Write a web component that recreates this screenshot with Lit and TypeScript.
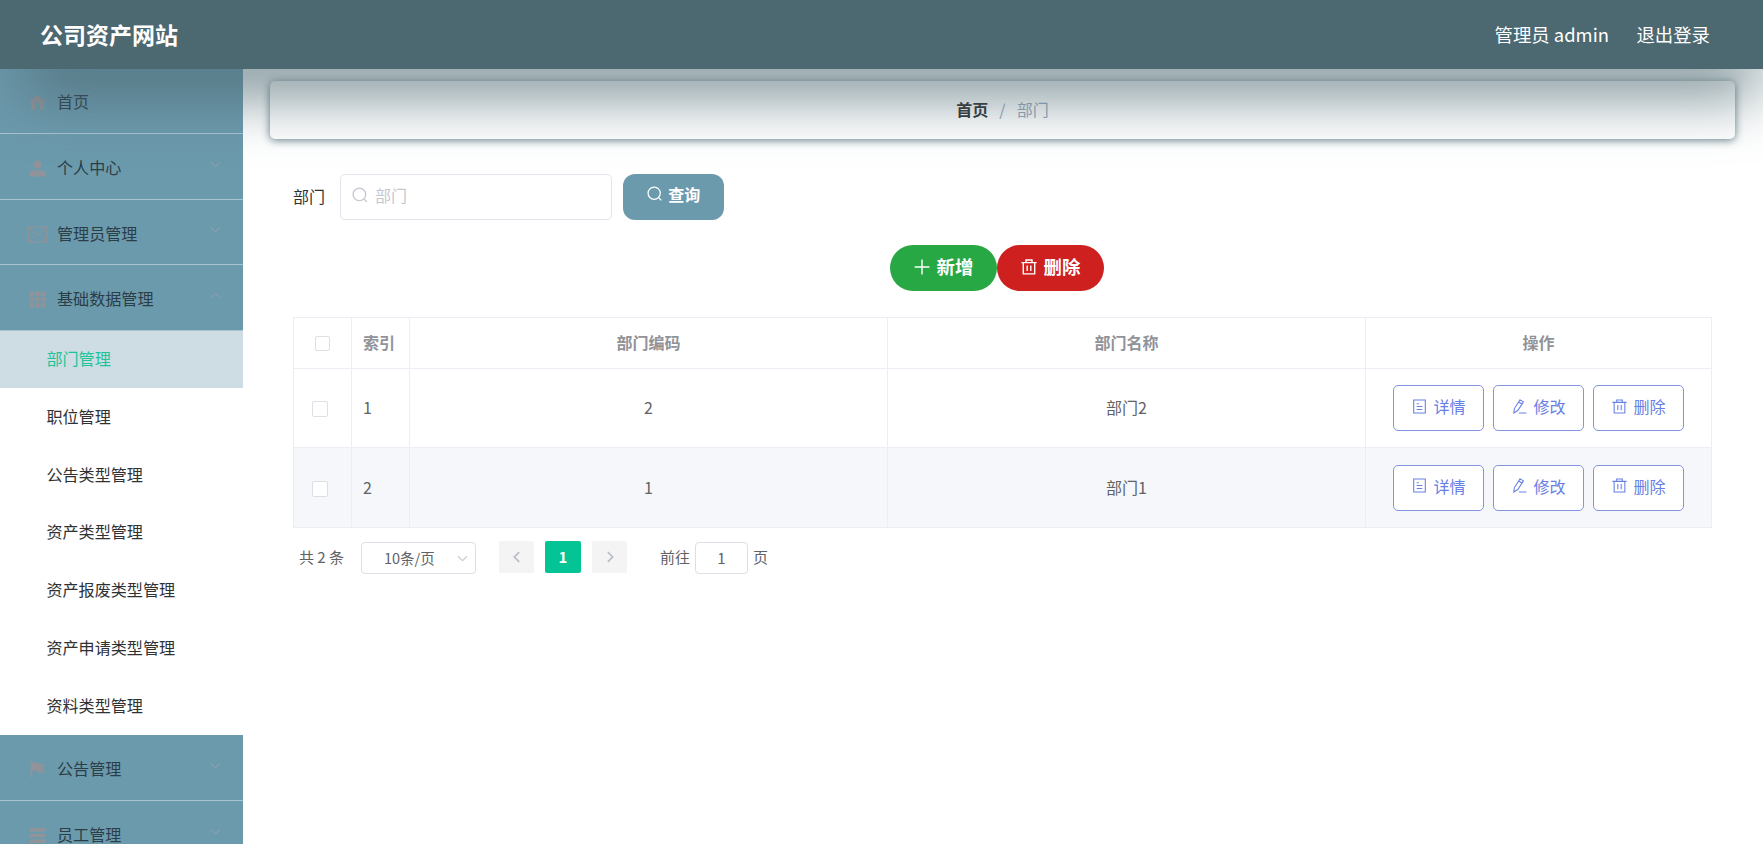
import { LitElement, html, css, svg } from "lit";
import { customElement } from "lit/decorators.js";
import { classMap } from "lit/directives/class-map.js";

const outlines: Record<string, unknown> = {
  search: svg`<circle cx="7.4" cy="7.4" r="6.3"/><path d="M12 12l2.8 2.8"/>`,
  plus: svg`<path d="M8 .6v14.8M.6 8h14.8"/>`,
  trash: svg`<path d="M.4 3.6h15.2M2.3 3.6v11.3h11.4V3.6M5 3.4V1h6v2.4M6.2 6.4v5.6M9.8 6.4v5.6"/>`,
  doc: svg`<path d="M1.8 1h12.4v14H1.8zM5 5h2.4M5 8h6M5 11.2h6"/>`,
  edit: svg`<path d="M8.6 .9l3.6 2.2-6 9.2-4.2 2.5.5-4.6zM7.2 3.2l3.5 2.2M7.4 14.9h8"/>`,
  down: svg`<path d="M2.5 5.2l5.5 5.5 5.5-5.5"/>`,
  up: svg`<path d="M2.5 10.7L8 5.2l5.5 5.5"/>`,
  left: svg`<path d="M10.5 2.5L5 8l5.5 5.5"/>`,
  right: svg`<path d="M5.5 2.5L11 8l-5.5 5.5"/>`,
  mail: svg`<path d="M-.6 1h17.2v14H-.6zM-.4 1.2L8 9l8.4-7.8M-.4 14.8l5.2-5M16.4 14.8l-5.2-5"/>`,
};

const solids: Record<string, unknown> = {
  home: svg`<path d="M8 .8L16 7l-.8 1.2-1.1-.7v7.8h-3.8V10.6a2.3 2.3 0 0 0-4.6 0v4.7H1.9V7.5l-1.1.7L0 7z"/>`,
  user: svg`<circle cx="8" cy="4.4" r="3.9"/><path d="M.3 15.5v-2.6C.3 10.8 2 9.6 4.2 9.6h7.6c2.2 0 3.9 1.2 3.9 3.3v2.6z"/>`,
  grid: svg`<path d="M.5.5h4.4v4.4H.5zM5.8.5h4.4v4.4H5.8zM11.1.5h4.4v4.4h-4.4zM.5 5.8h4.4v4.4H.5zM5.8 5.8h4.4v4.4H5.8zM11.1 5.8h4.4v4.4h-4.4zM.5 11.1h4.4v4.4H.5zM5.8 11.1h4.4v4.4H5.8zM11.1 11.1h4.4v4.4h-4.4z"/>`,
  flag: svg`<path d="M1.5.3h1.6v.9h5.2v1.7H15l-2.3 3.9L15 10.8H8V9.2H3.1V16H1.5z"/>`,
  list: svg`<path d="M.5 1h15v3.2H.5zM.5 6.4h15v3.2H.5zM.5 11.8h15V15H.5z"/>`,
};

@customElement("ui-icon")
class UiIcon extends LitElement {
  static properties = { name: { type: String } };
  declare name: string;
  static styles = css`
    :host { display: inline-flex; width: 16px; height: 16px; flex: none; }
    svg { width: 100%; height: 100%; overflow: visible; }
    .outline { fill: none; stroke: currentColor; stroke-width: var(--weight, 1.3); }
    .solid { fill: currentColor; }
  `;
  render() {
    const solid = this.name in solids;
    return html`<svg viewBox="0 0 16 16" class=${solid ? "solid" : "outline"}>
      ${solid ? solids[this.name] : outlines[this.name]}
    </svg>`;
  }
}

interface MenuEntry { icon: string; label: string; arrow?: string; children?: string[]; }

const menu: MenuEntry[] = [
  { icon: "home", label: "首页" },
  { icon: "user", label: "个人中心", arrow: "down" },
  { icon: "mail", label: "管理员管理", arrow: "down" },
  {
    icon: "grid", label: "基础数据管理", arrow: "up",
    children: ["部门管理", "职位管理", "公告类型管理", "资产类型管理", "资产报废类型管理", "资产申请类型管理", "资料类型管理"],
  },
  { icon: "flag", label: "公告管理", arrow: "down" },
  { icon: "list", label: "员工管理", arrow: "down" },
];

const rows = [
  { code: "2", name: "部门2" },
  { code: "1", name: "部门1" },
];

@customElement("side-menu")
class SideMenu extends LitElement {
  static styles = css`
    :host { display: block; width: 243px; flex: none; overflow: hidden; }
    .entry {
      box-sizing: border-box; height: 65.55px; padding: 2px 21px 0 29px;
      display: flex; align-items: center; gap: 12px;
      background: #6c9aad; border-bottom: 1px solid #a9c4cf;
      font-size: 16.1px;
    }
    .entry:first-child { height: 65px; padding-top: 0; }
    .icon { width: 17px; height: 17px; color: #909399; margin: 3px -1px 0 0; --weight: 1; }
    .label { flex: 1; color: #2b3e47; }
    .arrow { width: 13px; height: 13px; color: #93a5ae; margin-top: -6px; --weight: 1.2; }
    .sub {
      height: 57.8px; padding: 0 0 3px 46.4px; box-sizing: border-box;
      display: flex; align-items: center; background: #fff; color: #303133; font-size: 16.1px;
    }
    .active { background: #cedce3; color: #1dc497; }
  `;
  render() {
    return menu.map((m) => html`
      <div class="entry">
        <ui-icon class="icon" name=${m.icon}></ui-icon>
        <span class="label">${m.label}</span>
        ${m.arrow ? html`<ui-icon class="arrow" name=${m.arrow}></ui-icon>` : ""}
      </div>
      ${(m.children ?? []).map((c, i) => html`<div class=${classMap({ sub: true, active: i === 0 })}>${c}</div>`)}
    `);
  }
}

@customElement("dept-table")
class DeptTable extends LitElement {
  static styles = css`
    :host { display: block; }
    .table { border: 1px solid #ebeef5; border-right: 0; border-bottom: 0; color: #606266; font-size: 16px; }
    .row { display: grid; grid-template-columns: 58px 58px 478px 478px 1fr; height: 79.5px; }
    .head { height: 51px; color: #909399; font-weight: 700; }
    .striped { background: #f5f7fb; }
    .cell {
      box-sizing: border-box; border-right: 1px solid #ebeef5; border-bottom: 1px solid #ebeef5;
      display: flex; align-items: center; justify-content: center; padding-bottom: 1px;
    }
    .index { justify-content: flex-start; padding-left: 11px; }
    .check { justify-content: flex-start; padding-left: 18px; }
    .head .check { padding-left: 21px; }
    .head .box { width: 13px; height: 13px; margin-top: 3px; }
    .box { width: 14px; height: 14px; border: 1px solid #dcdfe6; border-radius: 2px; background: #fff; margin-top: 4px; }
    .actions { gap: 9px; padding: 1px 0 0; }
    .btn {
      box-sizing: border-box; width: 91px; height: 46px; border: 1px solid #8594df; border-radius: 5px;
      background: #fff; color: #6880e4; display: flex; align-items: center; justify-content: center;
      gap: 6px; padding: 0 0 4px 1px; font-size: 16.1px;
    }
    .btn ui-icon { width: 15px; height: 15px; --weight: 1.15; }
  `;
  render() {
    const acts = [["doc", "详情"], ["edit", "修改"], ["trash", "删除"]];
    return html`<div class="table">
      <div class="row head">
        <div class="cell check"><span class="box"></span></div>
        <div class="cell index">索引</div>
        <div class="cell">部门编码</div>
        <div class="cell">部门名称</div>
        <div class="cell">操作</div>
      </div>
      ${rows.map((r, i) => html`<div class=${classMap({ row: true, striped: i % 2 === 1 })}>
        <div class="cell check"><span class="box"></span></div>
        <div class="cell index">${i + 1}</div>
        <div class="cell">${r.code}</div>
        <div class="cell">${r.name}</div>
        <div class="cell actions">
          ${acts.map(([icon, label]) => html`<div class="btn"><ui-icon name=${icon}></ui-icon>${label}</div>`)}
        </div>
      </div>`)}
    </div>`;
  }
}

@customElement("page-bar")
class PageBar extends LitElement {
  static styles = css`
    :host { display: flex; align-items: center; color: #606266; font-size: 15px; height: 33px; padding-left: 6px; }
    .total { width: 62px; }
    .field {
      box-sizing: border-box; height: 32px; border: 1px solid #dcdfe6; border-radius: 4px;
      display: flex; align-items: center; margin-top: 2px;
    }
    .size { width: 115px; padding: 0 6px 0 22px; justify-content: space-between; margin-right: 23px; font-size: 14.5px; }
    .size ui-icon { width: 13px; height: 13px; color: #c8ccd3; --weight: 1.4; }
    .page {
      width: 35px; height: 32px; border-radius: 2px; background: #f4f4f5; color: #b9bdc5;
      display: flex; align-items: center; justify-content: center; margin-right: 11px;
    }
    .page ui-icon { width: 14px; height: 14px; --weight: 2; }
    .current { background: #04c394; color: #fff; font-weight: 700; width: 36px; }
    .jump { margin-left: 22px; width: 35px; }
    .num { width: 53px; justify-content: center; margin-right: 5px; }
  `;
  render() {
    return html`
      <span class="total">共 2 条</span>
      <div class="field size">10条/页<ui-icon name="down"></ui-icon></div>
      <div class="page"><ui-icon name="left"></ui-icon></div>
      <div class="page current">1</div>
      <div class="page"><ui-icon name="right"></ui-icon></div>
      <span class="jump">前往</span>
      <div class="field num">1</div>
      <span>页</span>`;
  }
}

@customElement("app-root")
class AppRoot extends LitElement {
  static styles = css`
    :host {
      display: flex; flex-direction: column; height: 844px; overflow: hidden; background: #fff;
      font-family: "Noto Sans CJK SC", sans-serif; line-height: 1.5;
    }
    .header {
      box-sizing: border-box; height: 69px; flex: none; padding: 0 53px 0 40px; background: #4c6871;
      color: #fff; display: flex; align-items: center; font-size: 18.4px; gap: 27.5px;
      position: relative; z-index: 1; box-shadow: 10px 32px 64px -12px #4c6871;
    }
    .title { font-size: 23px; font-weight: 700; flex: 1; }
    .body { display: flex; flex: 1; min-height: 0; }
    .main { flex: 1; padding: 12px 28px 0 27px; min-width: 0; }
    .crumbs {
      box-sizing: border-box; height: 57.5px; padding-bottom: 1px; border-radius: 5px; background: #fff;
      box-shadow: 0 1px 8px #5f7a83;
      display: flex; align-items: center; justify-content: center; gap: 11px; font-size: 16px; color: #97a8be;
    }
    .home { color: #303133; font-weight: 700; }
    .content { padding: 35px 23px 0; }
    .search { display: flex; align-items: center; font-size: 16px; color: #303133; }
    .search > span { margin-top: -1px; }
    .input {
      box-sizing: border-box; width: 272px; height: 46px; border: 1px solid #e2e5ec; border-radius: 5px;
      margin: 0 11px 0 15px; padding: 0 11px 4px; display: flex; align-items: center; gap: 7px; color: #c3c7cf;
    }
    .query {
      width: 101px; height: 46px; box-sizing: border-box; border-radius: 12px; background: #6c9aad; color: #fff;
      display: flex; align-items: center; justify-content: center; gap: 6px; font-weight: 700; padding-bottom: 5px;
    }
    .query ui-icon { width: 15.5px; height: 15.5px; }
    .tools { display: flex; justify-content: center; margin: 25px 12px 26px 0; }
    .tool {
      box-sizing: border-box; width: 107px; height: 46px; padding: 0 0 1px 1px; border-radius: 23px; color: #fff;
      font-size: 18.4px; font-weight: 700;
      display: flex; align-items: center; justify-content: center; gap: 7px;
    }
    .tool ui-icon { width: 16px; height: 16px; --weight: 1.4; }
    .add { background: #28a745; }
    .del { background: #cd201f; }
    .pager { margin-top: 13px; }
  `;
  render() {
    return html`
      <div class="header">
        <div class="title">公司资产网站</div>
        <span>管理员 admin</span>
        <span>退出登录</span>
      </div>
      <div class="body">
        <side-menu></side-menu>
        <div class="main">
          <div class="crumbs"><span class="home">首页</span><span>/</span><span>部门</span></div>
          <div class="content">
            <div class="search">
              <span>部门</span>
              <div class="input"><ui-icon name="search"></ui-icon>部门</div>
              <div class="query"><ui-icon name="search"></ui-icon>查询</div>
            </div>
            <div class="tools">
              <div class="tool add"><ui-icon name="plus"></ui-icon>新增</div>
              <div class="tool del"><ui-icon name="trash"></ui-icon>删除</div>
            </div>
            <dept-table></dept-table>
            <page-bar class="pager"></page-bar>
          </div>
        </div>
      </div>`;
  }
}
